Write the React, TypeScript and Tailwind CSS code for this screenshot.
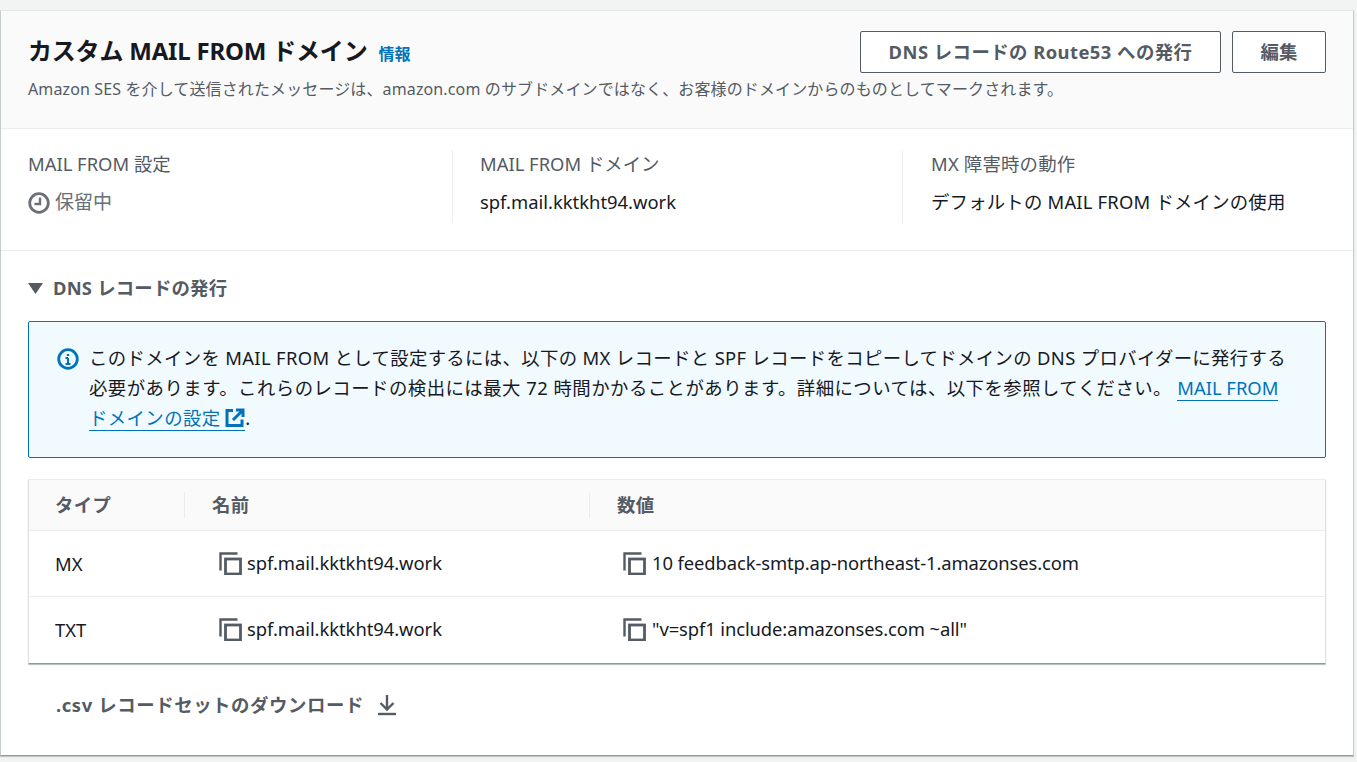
const FONT = "font-['Noto_Sans','Noto_Sans_CJK_JP',sans-serif]";

function CopyIcon() {
  return (
    <svg width="23" height="23" viewBox="0 0 23 23" fill="none" stroke="#545b64" className="shrink-0">
      <path d="M1.500 18.500V1.500h17" strokeWidth="2.400" />
      <rect x="6.500" y="7" width="15" height="15" strokeWidth="2.800" />
    </svg>
  );
}

const rows = [
  { type: 'MX', name: 'spf.mail.kktkht94.work', value: '10 feedback-smtp.ap-northeast-1.amazonses.com' },
  { type: 'TXT', name: 'spf.mail.kktkht94.work', value: '"v=spf1 include:amazonses.com ~all"' },
];

export default function App() {
  return (
    <div className={`${FONT} h-[762px] overflow-hidden bg-[#f2f3f3] pt-[10px] pr-[3px]`}>
      <div className="h-[746px] border-x border-b border-t border-t-[#e4e7e7] border-x-[#c6cccc] border-b-[#8f9b9b] bg-white shadow-[0_1px_1px_0_rgba(0,28,36,0.2)]">
        {/* Header */}
        <div className="h-[118px] border-b border-[#eaeded] bg-[#fafafa] px-[27px] pt-[20px]">
          <div className="flex h-[42px] items-start justify-between">
            <div className="flex items-baseline">
              <h1 className="text-[24px] leading-[40px] font-bold tracking-[-0.2px] text-[#16191f]">カスタム MAIL FROM ドメイン</h1>
              <span className="ml-[11px] text-[16px] font-bold text-[#0073bb]">情報</span>
            </div>
            <div className="flex gap-[11px]">
              <button className="h-[42px] w-[361px] rounded-[2px] border border-[#545b64] bg-white text-[18.4px] font-bold tracking-[0.45px] text-[#545b64]">
                DNS レコードの Route53 への発行
              </button>
              <button className="h-[42px] w-[94px] rounded-[2px] border border-[#545b64] bg-white text-[18.4px] font-bold text-[#545b64]">
                編集
              </button>
            </div>
          </div>
          <p className="mt-[4px] text-[16px] leading-[24px] tracking-[0.125px] text-[#545b64]">
            Amazon SES を介して送信されたメッセージは、amazon.com のサブドメインではなく、お客様のドメインからのものとしてマークされます。
          </p>
        </div>

        {/* Summary */}
        <div className="flex h-[122px] border-b border-[#eaeded] pt-[21px] pl-[27px]">
          <div className="h-[73px] w-[425px] border-r border-[#eaeded]">
            <div className="text-[18.4px] leading-[27px] text-[#545b64]">MAIL FROM 設定</div>
            <div className="mt-[12px] flex items-center gap-[5px] text-[19px] leading-[27px] text-[#687078]">
              <svg width="22" height="22" viewBox="0 0 22 22" fill="none" stroke="#687078" strokeWidth="2.800">
                <circle cx="11" cy="11" r="9.300" />
                <path d="M12 5.500V12H6.500" strokeWidth="2.400" />
              </svg>
              保留中
            </div>
          </div>
          <div className="h-[73px] w-[450px] border-r border-[#eaeded] pl-[27px]">
            <div className="text-[18.4px] leading-[27px] text-[#545b64]">MAIL FROM ドメイン</div>
            <div className="mt-[11px] text-[18.4px] leading-[27px] text-[#16191f]">spf.mail.kktkht94.work</div>
          </div>
          <div className="pl-[28px]">
            <div className="text-[18.4px] leading-[27px] tracking-[0.2px] text-[#545b64]">MX 障害時の動作</div>
            <div className="mt-[11px] text-[18.4px] leading-[27px] tracking-[0.2px] text-[#16191f]">デフォルトの MAIL FROM ドメインの使用</div>
          </div>
        </div>

        {/* DNS section */}
        <div className="px-[27px]">
          <div className="mt-[24px] flex h-[26px] items-center gap-[10px] text-[18.4px] font-bold tracking-[0.2px] text-[#545b64]">
            <svg width="15" height="11" viewBox="0 0 15 11" fill="#545b64">
              <path d="M0 0h15L7.500 11z" />
            </svg>
            DNS レコードの発行
          </div>

          <div className="mt-[20px] flex h-[137px] gap-[10px] rounded-[2px] border border-[#0073bb] bg-[#f1faff] pt-[21px] pl-[28px] pr-[30px]">
            <svg width="22" height="22" viewBox="0 0 22 22" fill="none" stroke="#0073bb" strokeWidth="2.800" className="mt-[5px] shrink-0">
              <circle cx="11" cy="11" r="9.300" />
              <path d="M11 10v6M8.500 16h5M8.500 10H11" strokeWidth="2" />
              <path d="M11 6v2" strokeWidth="2.400" />
            </svg>
            <p className="text-[18.4px] leading-[30px] text-[#16191f]">
              <span className="tracking-[0.34px]">
                このドメインを MAIL FROM として設定するには、以下の MX レコードと SPF レコードをコピーしてドメインの DNS プロバイダーに発行する
              </span>
              <br />
              <span className="tracking-[0.47px]">
                必要があります。これらのレコードの検出には最大 72 時間かかることがあります。詳細については、以下を参照してください。{' '}
              </span>
              <span className="border-b border-[#0073bb] text-[#0073bb]">
                MAIL FROM
                <br />
                <span className="tracking-[0.4px]">ドメインの設定</span>{' '}
                <svg width="20" height="20" viewBox="0 0 20 20" fill="none" stroke="#0073bb" strokeWidth="3" className="inline align-[-3px]">
                  <path d="M8 2.500H2v15h15v-6" />
                  <path d="M8 12l9-9M11 2h7v7" />
                </svg>
              </span>
              .
            </p>
          </div>

          {/* Table */}
          <div className="mt-[21px] h-[185px] rounded-[1px] border border-[#eaeded] border-x-[#dde1e1] border-b-[#8f9b9b] shadow-[0_1px_1px_0_rgba(0,28,36,0.3)]">
            <div className="grid h-[51px] grid-cols-[156px_405px_1fr] items-center border-b border-[#eaeded] bg-[#fafafa] text-[18.4px] font-bold tracking-[0.3px] text-[#545b64]">
              <div className="h-[26px] border-r border-[#eaeded] pl-[26px] leading-[25px]">タイプ</div>
              <div className="h-[26px] border-r border-[#eaeded] pl-[27px] leading-[25px]">名前</div>
              <div className="h-[26px] pl-[27px] leading-[25px]">数値</div>
            </div>
            {rows.map((r, i) => (
              <div
                key={r.type}
                className={`grid h-[66px] grid-cols-[156px_405px_1fr] items-center text-[18.4px] tracking-[-0.05px] text-[#16191f] ${i === 0 ? 'border-b border-[#eaeded]' : ''}`}
              >
                <div className="pl-[26px]">{r.type}</div>
                <div className="flex items-center gap-[5px] pl-[34px]">
                  <CopyIcon />
                  <span className="pb-[2px]">{r.name}</span>
                </div>
                <div className="flex items-center gap-[6px] pl-[33px]">
                  <CopyIcon />
                  <span className="pb-[2px] tracking-[-0.1px]">{r.value}</span>
                </div>
              </div>
            ))}
          </div>

          {/* Download */}
          <div className="mt-[27px] flex items-center gap-[13px] pl-[28px] text-[18.4px] font-bold tracking-[0.6px] text-[#545b64]">
            .csv レコードセットのダウンロード
            <svg width="20" height="22" viewBox="0 0 20 22" fill="none" stroke="#545b64" strokeWidth="2.400">
              <path d="M10 1v14M3.500 9l6.500 6.500L16.500 9" />
              <path d="M1 20h18" />
            </svg>
          </div>
        </div>
      </div>
    </div>
  );
}
